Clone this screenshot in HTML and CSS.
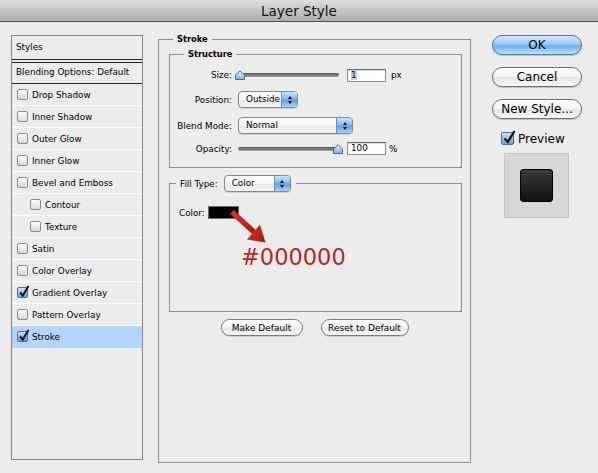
FILE: index.html
```html
<!DOCTYPE html>
<html>
<head>
<meta charset="utf-8">
<title>Layer Style</title>
<link rel="stylesheet" href="styles.css">
</head>
<body>
<div class="titlebar">Layer Style</div>
<div class="dialog">
  <div class="sidebar">
    <div class="side-head">Styles</div>
    <div class="side-blend">Blending Options: Default</div>
    <ul class="side-list">
      <li class="item"><span class="cb"></span>Drop Shadow</li>
      <li class="item"><span class="cb"></span>Inner Shadow</li>
      <li class="item"><span class="cb"></span>Outer Glow</li>
      <li class="item"><span class="cb"></span>Inner Glow</li>
      <li class="item"><span class="cb"></span>Bevel and Emboss</li>
      <li class="item sub"><span class="cb"></span>Contour</li>
      <li class="item sub"><span class="cb"></span>Texture</li>
      <li class="item"><span class="cb"></span>Satin</li>
      <li class="item"><span class="cb"></span>Color Overlay</li>
      <li class="item"><span class="cb on"><svg class="check" width="12" height="14" viewBox="0 0 12 14"><path d="M2 7.5 L4.8 10.5 L10.5 1" fill="none" stroke="#111" stroke-width="2"/></svg></span>Gradient Overlay</li>
      <li class="item"><span class="cb"></span>Pattern Overlay</li>
      <li class="item selected"><span class="cb on"><svg class="check" width="12" height="14" viewBox="0 0 12 14"><path d="M2 7.5 L4.8 10.5 L10.5 1" fill="none" stroke="#111" stroke-width="2"/></svg></span>Stroke</li>
    </ul>
  </div>

  <div class="main">
    <div class="group outer">
      <div class="legend bold">Stroke</div>
      <div class="group structure">
        <div class="legend bold">Structure</div>
        <div class="row r-size">
          <span class="lbl">Size:</span>
          <div class="slider"><div class="track"></div><svg class="thumb thumb-left" width="10" height="10" viewBox="0 0 10 10"><defs><linearGradient id="tg1" x1="0" y1="0" x2="0" y2="1"><stop offset="0" stop-color="#eef6ff"/><stop offset="1" stop-color="#7eaee4"/></linearGradient></defs><path d="M0.5 5 L5 0.8 L9.5 5 V9.5 H0.5 Z" fill="url(#tg1)" stroke="#3f6c9f" stroke-width="1"/></svg></div>
          <div class="num"><span class="sel">1</span></div>
          <span class="unit">px</span>
        </div>
        <div class="row r-pos">
          <span class="lbl">Position:</span>
          <div class="select w-pos"><span class="val">Outside</span><span class="arr"><i class="up"></i><i class="dn"></i></span></div>
        </div>
        <div class="row r-blend">
          <span class="lbl">Blend Mode:</span>
          <div class="select w-blend"><span class="val">Normal</span><span class="arr"><i class="up"></i><i class="dn"></i></span></div>
        </div>
        <div class="row r-op">
          <span class="lbl">Opacity:</span>
          <div class="slider"><div class="track track-op"></div><svg class="thumb thumb-right" width="10" height="10" viewBox="0 0 10 10"><defs><linearGradient id="tg2" x1="0" y1="0" x2="0" y2="1"><stop offset="0" stop-color="#eef6ff"/><stop offset="1" stop-color="#7eaee4"/></linearGradient></defs><path d="M0.5 5 L5 0.8 L9.5 5 V9.5 H0.5 Z" fill="url(#tg2)" stroke="#3f6c9f" stroke-width="1"/></svg></div>
          <div class="num">100</div>
          <span class="unit pct">%</span>
        </div>
      </div>

      <div class="group fill">
        <div class="fill-legend">
          <span>Fill Type:</span>
          <div class="select w-fill"><span class="val">Color</span><span class="arr"><i class="up"></i><i class="dn"></i></span></div>
        </div>
        <div class="color-row"><span>Color:</span><span class="swatch"></span></div>
        <div class="hex">#000000</div>
        <svg class="arrow" width="40" height="40" viewBox="0 0 40 40">
          <defs><linearGradient id="ag" x1="0" y1="0" x2="1" y2="1"><stop offset="0" stop-color="#d23a2a"/><stop offset="1" stop-color="#a51a10"/></linearGradient></defs>
          <line x1="2" y1="3" x2="24" y2="23" stroke="url(#ag)" stroke-width="5.5"/>
          <polygon points="17,30.5 30,15.5 35.5,33.5" fill="url(#ag)"/>
        </svg>
      </div>

      <div class="btn-row">
        <button class="btn-small w-make">Make Default</button>
        <button class="btn-small w-reset">Reset to Default</button>
      </div>
    </div>
  </div>

  <div class="actions">
    <button class="btn primary">OK</button>
    <button class="btn">Cancel</button>
    <button class="btn">New Style...</button>
    <div class="preview-row"><span class="cb big on"><svg class="check" width="14" height="16" viewBox="0 0 14 16"><path d="M2.5 8.5 L5.8 12 L12.5 1" fill="none" stroke="#111" stroke-width="2.2"/></svg></span><span>Preview</span></div>
    <div class="preview-box"><div class="preview-swatch"></div></div>
  </div>
</div>
</body>
</html>
```

FILE: styles.css
```css
html, body {
  margin: 0;
  padding: 0;
}
body {
  background: #ececec;
  font-family: "DejaVu Sans", "Liberation Sans", sans-serif;
  font-size: 8.8px;
  color: #000;
  width: 598px;
  height: 473px;
  overflow: hidden;
}

.titlebar {
  height: 22px;
  box-sizing: border-box;
  padding-top: 1px;
  border-bottom: 1px solid #4e4e4e;
  background: linear-gradient(#dcdcdc, #adadad);
  display: flex;
  align-items: center;
  justify-content: center;
  font-size: 13.5px;
  color: #111;
}

.dialog {
  display: flex;
  padding-left: 11px;
}

/* ---------- sidebar ---------- */
.sidebar {
  margin-top: 13px;
  width: 132px;
  height: 425px;
  box-sizing: border-box;
  border: 1px solid #858585;
}
.side-head {
  height: 23px;
  line-height: 22px;
  padding-left: 4px;
  border-bottom: 1px solid #262626;
}
.side-blend {
  margin-top: 2px;
  height: 20px;
  line-height: 18px;
  padding-left: 4px;
  border-top: 1px solid #262626;
  border-bottom: 1px solid #262626;
}
.side-list {
  list-style: none;
  margin: 0;
  padding: 0;
}
.item {
  height: 21px;
  border-bottom: 1px solid #fafafa;
  display: flex;
  align-items: center;
  gap: 4px;
  padding-left: 5px;
}
.item.sub {
  padding-left: 18px;
}
.item.selected {
  background: #b5d5ff;
  border-bottom-color: #b5d5ff;
}

.cb {
  position: relative;
  flex: none;
  width: 11px;
  height: 11px;
  box-sizing: border-box;
  border: 1px solid #8a8a8a;
  border-radius: 2px;
  background: linear-gradient(#fefefe, #dadada);
}
.cb.on {
  border-color: #4d6d98;
  background: linear-gradient(#cfe2f8, #6b9ddb);
}
.cb .check {
  position: absolute;
  left: 0;
  top: -3px;
}
.cb.big {
  width: 13px;
  height: 13px;
}

/* ---------- main ---------- */
.main {
  margin-left: 15px;
  margin-top: 17px;
}
.group {
  box-sizing: border-box;
  border: 1px solid #8e8e8e;
}
.outer {
  width: 313px;
  height: 424px;
}
.legend {
  width: fit-content;
  height: 12px;
  line-height: 12px;
  margin-top: -7px;
  margin-left: 14px;
  padding: 0 4px;
  background: #ececec;
}
.bold {
  font-weight: bold;
  font-size: 8.3px;
}
.structure {
  margin: 9px 0 0 10px;
  width: 293px;
  padding-bottom: 12px;
}
.row {
  display: flex;
  align-items: center;
}
.lbl {
  width: 62px;
  text-align: right;
  margin-right: 6px;
  flex: none;
}
.r-size { margin-top: 8px; height: 14px; }
.r-pos { margin-top: 9px; height: 17px; }
.r-blend { margin-top: 9px; height: 17px; }
.r-op { margin-top: 8px; height: 13px; }

.slider {
  position: relative;
  width: 104px;
  height: 12px;
  display: flex;
  align-items: center;
}
.track {
  width: 101px;
  height: 4px;
  border-radius: 2px;
  background: linear-gradient(#5a5a5a, #9c9c9c);
  box-shadow: 0 1px 0 #f6f6f6;
}
.track-op {
  width: 100px;
}
.thumb {
  position: absolute;
  top: 1px;
}
.thumb-left { left: -3px; }
.thumb-right { left: 95px; }

.num {
  width: 39px;
  height: 13px;
  box-sizing: border-box;
  margin-left: 5px;
  border: 1px solid #8c8c8c;
  border-top-color: #656565;
  background: #fff;
  padding-left: 3px;
  line-height: 11px;
  box-shadow: inset 0 1px 1px rgba(0,0,0,0.15);
}
.sel {
  background: #b5d5ff;
}
.unit {
  margin-left: 5px;
}
.unit.pct {
  margin-left: 3px;
}

.select {
  display: flex;
  height: 17px;
  box-sizing: border-box;
  border: 1px solid #878787;
  border-radius: 4px;
  overflow: hidden;
  background: linear-gradient(#ffffff, #f5f5f5 50%, #e8e8e8 51%, #f3f3f3);
  box-shadow: 0 1px 1px rgba(0,0,0,0.12);
}
.select .val {
  flex: 1;
  padding-left: 7px;
  line-height: 15px;
  white-space: nowrap;
}
.select .arr {
  width: 15px;
  flex: none;
  border-left: 1px solid #6d8fb8;
  background: linear-gradient(#cfe3fa, #83b6ee 48%, #5c9be6 52%, #a6d0f8);
  display: flex;
  flex-direction: column;
  align-items: center;
  justify-content: center;
  gap: 2px;
}
.arr i {
  display: block;
  width: 0;
  height: 0;
  border-left: 2.5px solid transparent;
  border-right: 2.5px solid transparent;
}
.arr .up { border-bottom: 3px solid #111; }
.arr .dn { border-top: 3px solid #111; }
.w-pos { width: 60px; }
.w-blend { width: 115px; }
.w-fill { width: 67px; }

.fill {
  position: relative;
  margin: 15px 0 0 10px;
  width: 293px;
  height: 129px;
}
.fill-legend {
  display: flex;
  align-items: center;
  gap: 6px;
  width: fit-content;
  height: 17px;
  margin-top: -9px;
  margin-left: 6px;
  padding: 0 5px 0 4px;
  background: #ececec;
}
.color-row {
  display: flex;
  align-items: center;
  gap: 3px;
  height: 13px;
  margin-top: 14px;
  padding-left: 9px;
}
.swatch {
  width: 31px;
  height: 13px;
  box-sizing: border-box;
  border: 1px solid #6e6e6e;
  background: #000;
}
.hex {
  margin-top: 25px;
  margin-left: 71px;
  font-size: 22.5px;
  line-height: 26px;
  color: #b8261d;
}
.arrow {
  position: absolute;
  left: 60px;
  top: 25px;
}

.btn-row {
  display: flex;
  justify-content: center;
  gap: 18px;
  margin-top: 7px;
}
.btn-small {
  height: 17px;
  box-sizing: border-box;
  padding: 0;
  border: 1px solid #7a7a7a;
  border-radius: 9px;
  background: linear-gradient(#ffffff, #f6f6f6 45%, #e6e6e6 55%, #fafafa);
  font-family: inherit;
  font-size: 9px;
  color: #000;
  box-shadow: 0 1px 1px rgba(0,0,0,0.15);
}
.w-make { width: 82px; }
.w-reset { width: 88px; }

/* ---------- actions ---------- */
.actions {
  margin-left: 21px;
  margin-top: 13px;
  width: 90px;
  display: flex;
  flex-direction: column;
  gap: 12px;
}
.btn {
  width: 90px;
  height: 20px;
  box-sizing: border-box;
  padding: 0;
  border: 1px solid #707070;
  border-radius: 10px;
  background: linear-gradient(#ffffff, #f4f4f4 45%, #e3e3e3 55%, #fbfbfb);
  font-family: inherit;
  font-size: 12px;
  color: #000;
  box-shadow: 0 1px 1px rgba(0,0,0,0.2);
}
.btn.primary {
  border-color: #5677a0;
  background: linear-gradient(#d2e8fd, #9ccbf5 45%, #6fb0ee 55%, #b9e2fd);
}
.preview-row {
  display: flex;
  align-items: center;
  gap: 4px;
  height: 13px;
  margin-top: 1px;
  padding-left: 9px;
  font-size: 12px;
}
.preview-box {
  width: 65px;
  height: 65px;
  box-sizing: border-box;
  margin-top: -4px;
  margin-left: 12px;
  border: 1px solid #c4c4c4;
  background: #d7d7d7;
  display: flex;
  align-items: center;
  justify-content: center;
}
.preview-swatch {
  width: 33px;
  height: 33px;
  box-sizing: border-box;
  border: 1px solid #050505;
  border-radius: 3px;
  background: linear-gradient(#3a3a3a, #111111);
}
```
